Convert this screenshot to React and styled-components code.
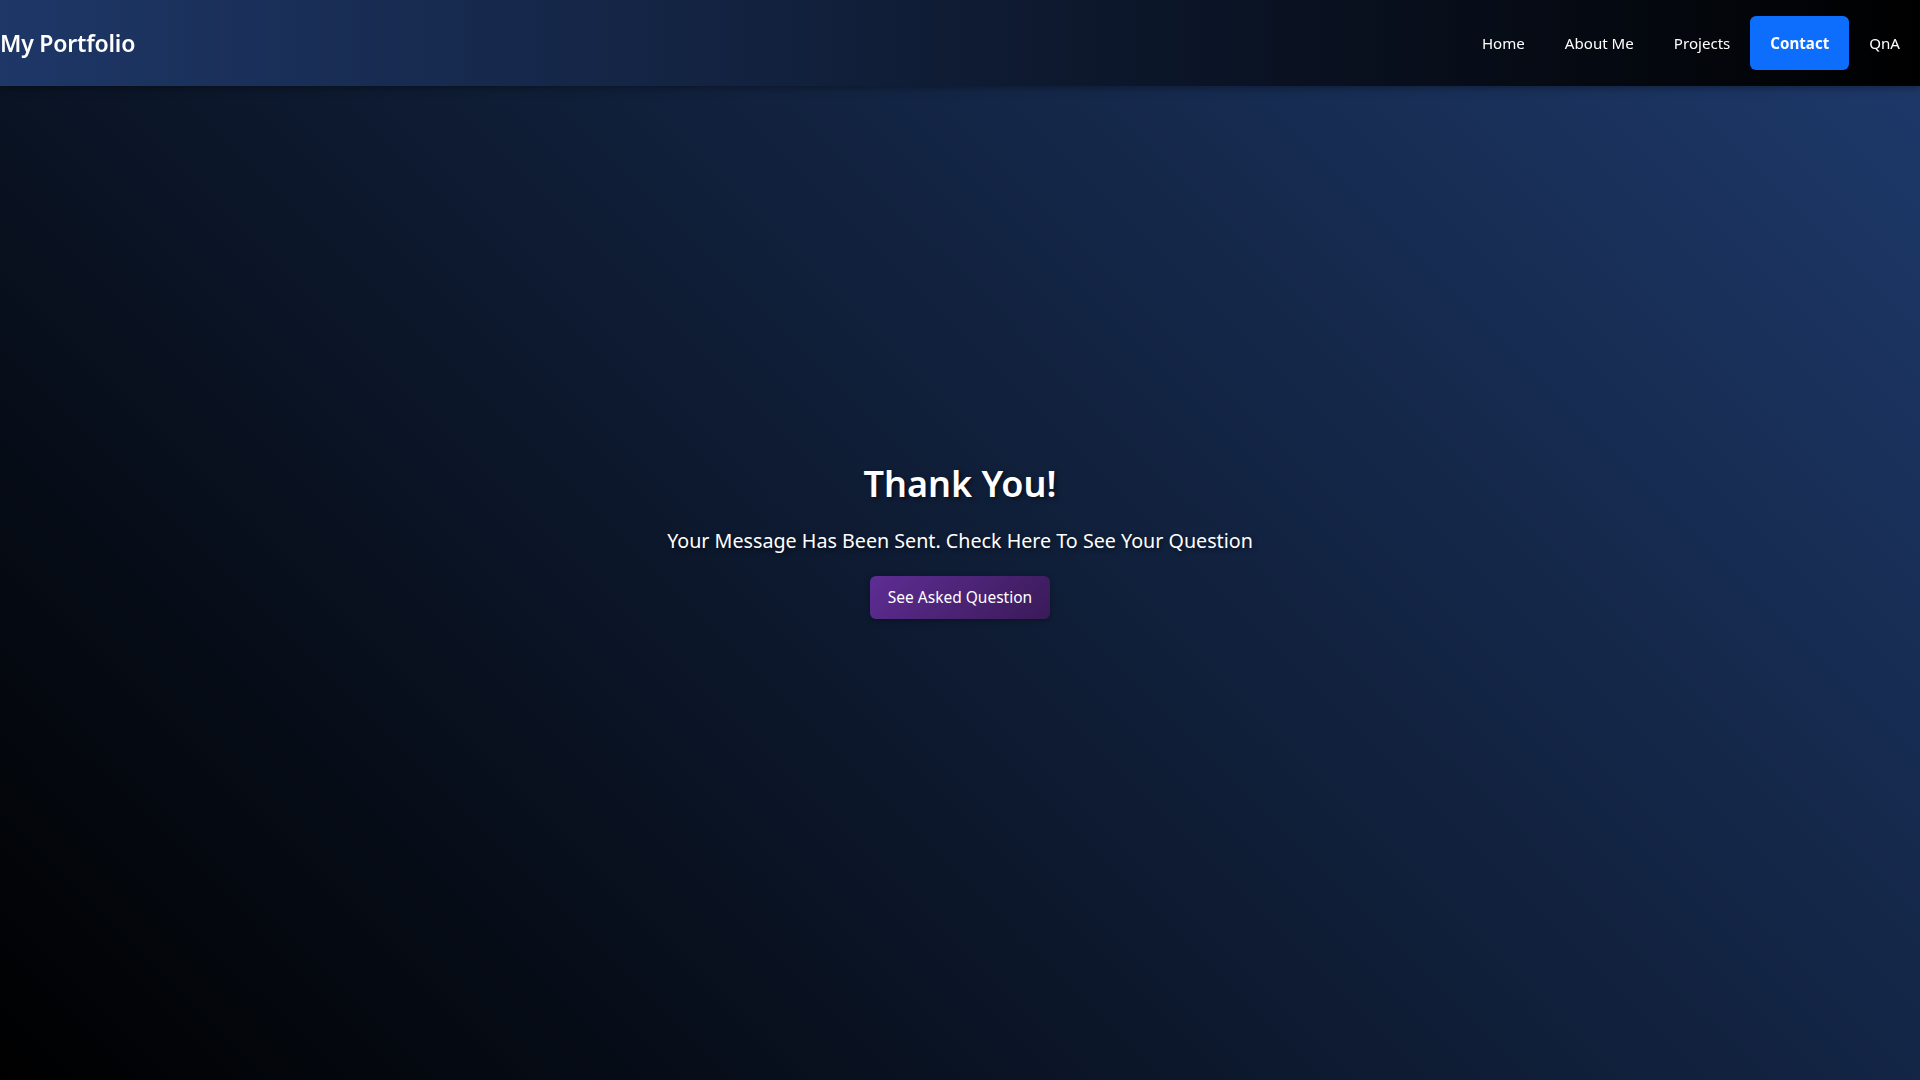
import React from "react";
import styled, { createGlobalStyle } from "styled-components";

const GlobalStyle = createGlobalStyle`
  *, *::before, *::after { box-sizing: border-box; }
  html, body { margin: 0; padding: 0; }
  body {
    font-family: "Segoe UI", "Noto Sans", "Open Sans", Arial, sans-serif;
    color: #fff;
    background: #000;
  }
`;

const Page = styled.div`
  min-height: 100vh;
  background: linear-gradient(45deg, #000000 0%, #1e3a6c 100%);
  display: flex;
  flex-direction: column;
`;

const Navbar = styled.nav`
  position: fixed;
  top: 0;
  left: 0;
  right: 0;
  height: 86px;
  display: flex;
  align-items: center;
  justify-content: space-between;
  background: linear-gradient(to right, #1e3767 0%, #000000 100%);
  box-shadow: 0 2px 8px rgba(0, 0, 0, 0.35);
  z-index: 10;
`;

const Brand = styled.a`
  font-size: 23px;
  font-weight: 600;
  color: #fff;
  text-decoration: none;
  letter-spacing: -0.2px;
`;

const NavList = styled.ul`
  list-style: none;
  display: flex;
  align-items: center;
  margin: 0;
  padding: 0;
`;

const NavLink = styled.a`
  display: block;
  padding: 16px 20px;
  font-size: 15.1px;
  line-height: 22px;
  color: #fff;
  text-decoration: none;
  border-radius: 6px;
  font-weight: ${(p) => (p.$active ? 700 : 400)};
  background: ${(p) => (p.$active ? "#0d6efd" : "transparent")};
`;

const Main = styled.main`
  flex: 1;
  min-height: 100vh;
  display: flex;
  flex-direction: column;
  align-items: center;
  justify-content: center;
  text-align: center;
`;

const Title = styled.h1`
  margin: 0 0 21px;
  font-size: 36px;
  font-weight: 600;
  line-height: 43px;
  text-shadow: 2px 2px 4px rgba(0, 0, 0, 0.5);
`;

const Subtitle = styled.p`
  margin: 0 0 20px;
  font-size: 19.7px;
  line-height: 30px;
  text-shadow: 2px 2px 4px rgba(0, 0, 0, 0.5);
`;

const ActionButton = styled.button`
  font-family: inherit;
  font-size: 15.5px;
  line-height: 24px;
  padding: 9.5px 18px;
  color: #fff;
  border: none;
  border-radius: 6px;
  cursor: pointer;
  background: linear-gradient(135deg, #5e2d94 0%, #3a1a58 100%);
  box-shadow: 0 2px 6px rgba(0, 0, 0, 0.3);
`;

const links = [
  { label: "Home" },
  { label: "About Me" },
  { label: "Projects" },
  { label: "Contact", active: true },
  { label: "QnA" },
];

export default function App() {
  return (
    <>
      <GlobalStyle />
      <Page>
        <Navbar>
          <Brand href="#">My Portfolio</Brand>
          <NavList>
            {links.map((l) => (
              <li key={l.label}>
                <NavLink href="#" $active={l.active}>
                  {l.label}
                </NavLink>
              </li>
            ))}
          </NavList>
        </Navbar>
        <Main>
          <Title>Thank You!</Title>
          <Subtitle>Your Message Has Been Sent. Check Here To See Your Question</Subtitle>
          <ActionButton>See Asked Question</ActionButton>
        </Main>
      </Page>
    </>
  );
}
